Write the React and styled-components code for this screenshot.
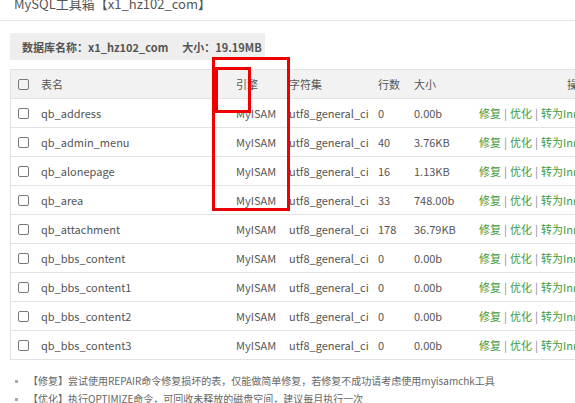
import React from "react";
import styled, { createGlobalStyle } from "styled-components";

const G = createGlobalStyle`
  body{margin:0;overflow:hidden;background:#fff;font-family:"Microsoft YaHei","Noto Sans CJK SC","Liberation Sans",sans-serif;color:#555;font-size:11px;}
`;
const Page = styled.div`position:relative;width:575px;height:403px;overflow:hidden;`;
const Title = styled.div`height:20px;line-height:8px;padding-left:14px;font-size:13px;color:#555;border-bottom:1px solid #e6e6e6;`;
const Info = styled.div`margin:12px 0 0 10px;width:255px;height:27px;background:#eee;border-radius:2px;display:flex;align-items:center;gap:14px;padding-left:12px;box-sizing:border-box;font-weight:bold;color:#555;font-size:11px;`;
const Table = styled.div`margin:9px 0 0 10px;width:620px;border:1px solid #e2e2e2;`;
const Row = styled.div`display:grid;grid-template-columns:30px 195px 53px 89px 36px 65px 1fr;align-items:center;height:28px;border-top:${p=>p.first?"none":"1px solid #e2e2e2"};background:${p=>p.head?"#f2f2f2":"#fff"};`;
const Box = styled.span`width:9px;height:9px;border:1px solid #777;border-radius:2px;margin-left:7px;`;
const Acts = styled.span`color:#3d9a3d;white-space:nowrap;& b{color:#888;font-weight:normal;padding:0 3px;}`;
const Notes = styled.ul`margin:12px 0 0 0;padding-left:28px;font-size:10px;color:#666;list-style:square;& li{height:18px;line-height:18px;}& li::marker{color:#aaa;font-size:8px;}`;
const RedBox = styled.div`position:absolute;border:3px solid #e00;box-sizing:border-box;`;

const rows=[["qb_address","0","0.00b"],["qb_admin_menu","40","3.76KB"],["qb_alonepage","16","1.13KB"],["qb_area","33","748.00b"],["qb_attachment","178","36.79KB"],["qb_bbs_content","0","0.00b"],["qb_bbs_content1","0","0.00b"],["qb_bbs_content2","0","0.00b"],["qb_bbs_content3","0","0.00b"]];

export default function App(){
  return <Page><G/>
    <Title>MySQL工具箱【x1_hz102_com】</Title>
    <Info><span>数据库名称：x1_hz102_com</span><span>大小：19.19MB</span></Info>
    <Table>
      <Row head first><Box/><span>表名</span><span>引擎</span><span>字符集</span><span>行数</span><span>大小</span><span style={{paddingLeft:88}}>操作</span></Row>
      {rows.map(r=><Row key={r[0]}><Box/><span>{r[0]}</span><span>MyISAM</span><span>utf8_general_ci</span><span>{r[1]}</span><span>{r[2]}</span><Acts>修复<b>|</b>优化<b>|</b>转为InnoDB</Acts></Row>)}
    </Table>
    <Notes>
      <li>【修复】尝试使用REPAIR命令修复损坏的表，仅能做简单修复，若修复不成功请考虑使用myisamchk工具</li>
      <li>【优化】执行OPTIMIZE命令，可回收未释放的磁盘空间，建议每月执行一次</li>
    </Notes>
    <RedBox style={{left:212,top:57,width:78,height:154}}/>
    <RedBox style={{left:215,top:67,width:36,height:46}}/>
  </Page>;
}
